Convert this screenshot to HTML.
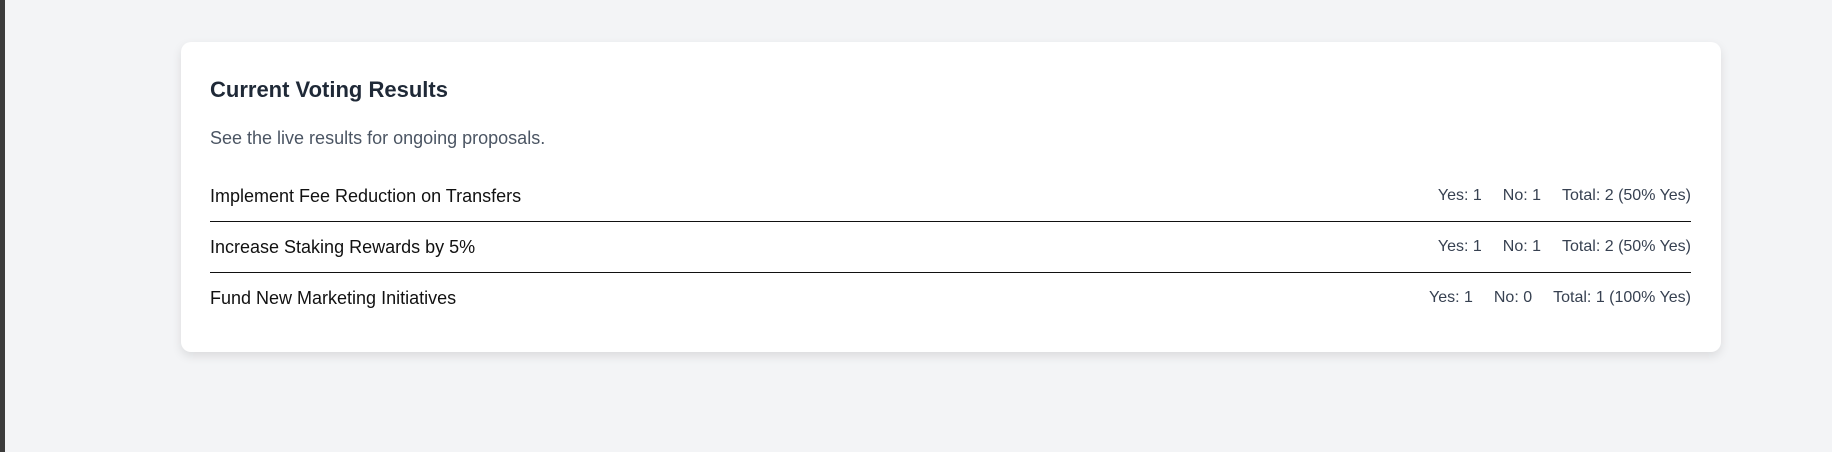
<!DOCTYPE html>
<html><head><style>
html,body{margin:0;padding:0;}
body{width:1832px;height:452px;background:#f3f4f6;font-family:"Liberation Sans",sans-serif;position:relative;overflow:hidden;}
.bar{position:absolute;left:0;top:0;width:5px;height:452px;background:#3b3b3b;}
.card{position:absolute;left:181px;top:42px;width:1540px;height:310px;background:#fff;border-radius:10px;box-shadow:0 4px 10px rgba(0,0,0,0.1);}
h2{position:absolute;left:29px;top:34px;margin:0;font-size:22px;font-weight:bold;color:#1f2937;line-height:28px;}
.sub{position:absolute;left:29px;margin:0;font-size:18px;color:#4b5563;line-height:26px;top:83px;}
.rows{position:absolute;left:29px;right:30px;top:129px;}
.row{display:flex;justify-content:space-between;align-items:center;padding:12px 0;line-height:26px;border-bottom:1.5px solid #111;}
.row:last-child{border-bottom:none;}
.name{font-size:18px;color:#111;}
.st{font-size:16px;color:#374151;}
.st span{margin-left:21px;}
</style></head><body>
<div class="bar"></div>
<div class="card">
<h2>Current Voting Results</h2>
<p class="sub">See the live results for ongoing proposals.</p>
<div class="rows">
<div class="row"><div class="name">Implement Fee Reduction on Transfers</div><div class="st">Yes: 1<span>No: 1</span><span>Total: 2 (50% Yes)</span></div></div>
<div class="row"><div class="name">Increase Staking Rewards by 5%</div><div class="st">Yes: 1<span>No: 1</span><span>Total: 2 (50% Yes)</span></div></div>
<div class="row"><div class="name">Fund New Marketing Initiatives</div><div class="st">Yes: 1<span>No: 0</span><span>Total: 1 (100% Yes)</span></div></div>
</div>
</div>
</body></html>
